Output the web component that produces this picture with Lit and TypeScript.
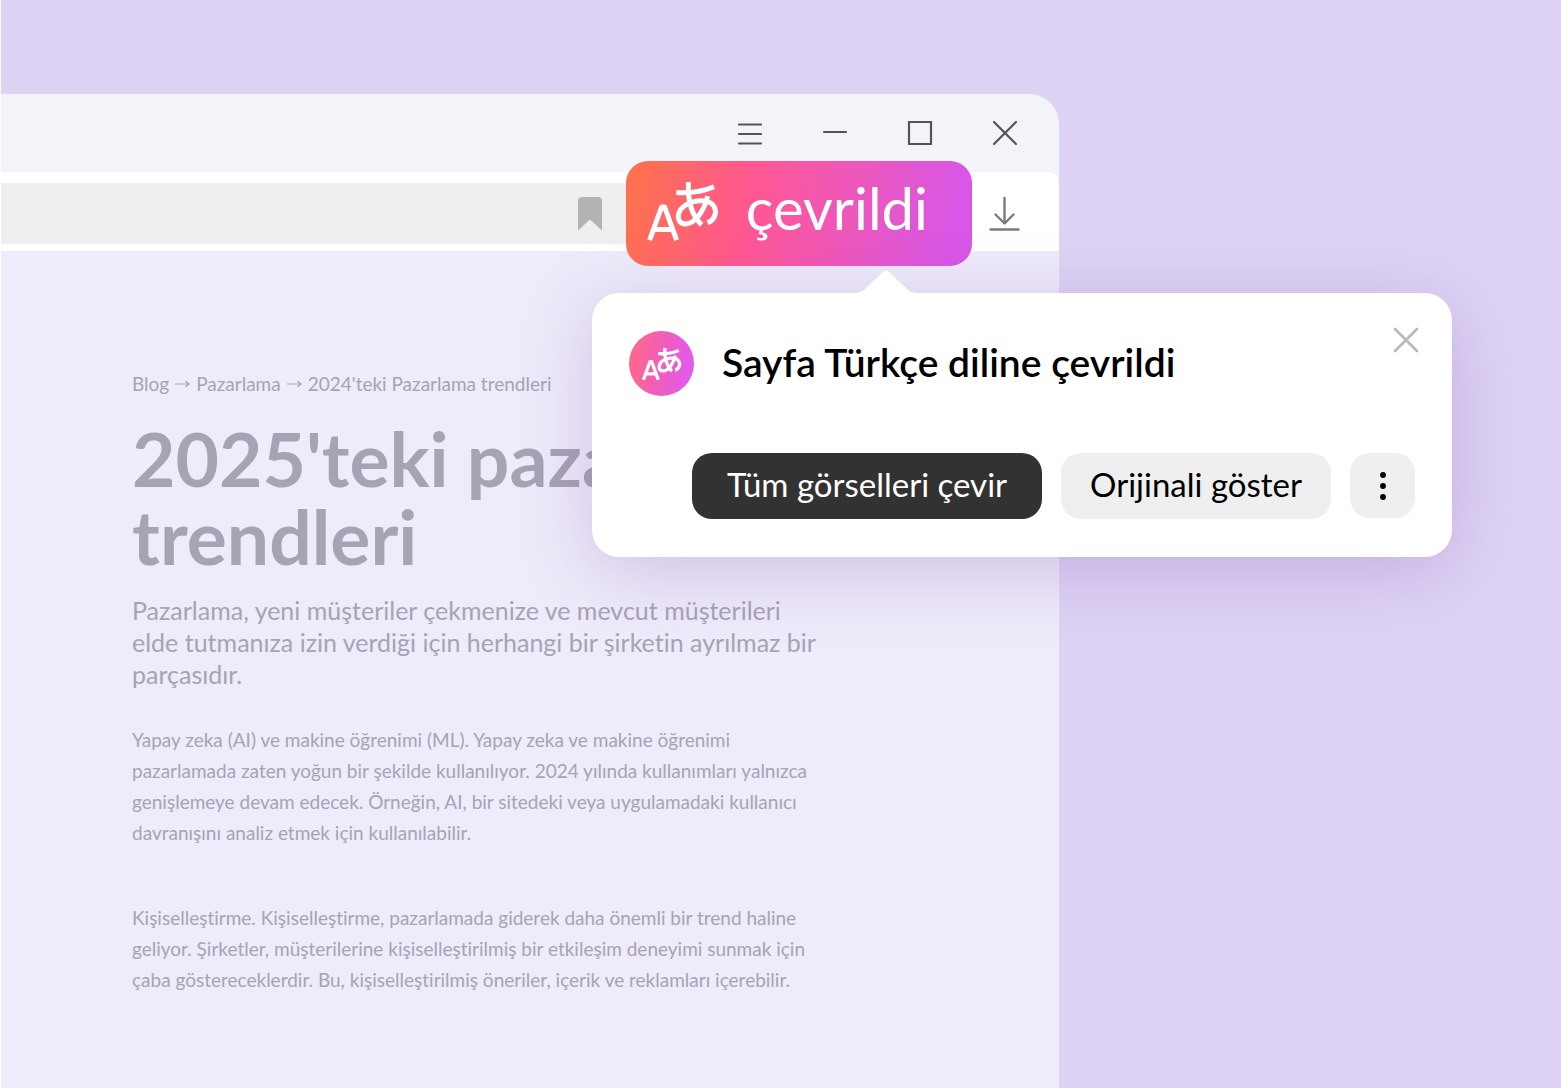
import { LitElement, html, css, svg } from "lit";
import { customElement } from "lit/decorators.js";

const translateIcon = svg`
  <g fill="none" stroke="currentColor">
    <path d="M2.600 59.200 14.600 26h3L29.600 59.200M7 48.400h18.400" stroke-linejoin="round" />
    <path d="M29.400 11.600Q50 13 67 5.800" />
    <path d="M41.500 1.200C40.500 20 44 34 54.600 43.800" />
    <path d="M60.700 15.200C57 30 48 43.500 38 43C29 42.500 29 30.500 38 24.500C47 19 59 18 65 23C71.500 29 68 39.500 60.400 41.600" />
  </g>`;

@customElement("translate-mark")
export class TranslateMark extends LitElement {
  static styles = css`
    :host { display: block; flex: none; stroke-width: 5; }
    .mark { display: block; width: 100%; height: 100%; overflow: visible; }
  `;
  render() {
    return html`<svg class="mark" viewBox="0 0 71 61" aria-hidden="true">${translateIcon}</svg>`;
  }
}

@customElement("translate-popup")
export class TranslatePopup extends LitElement {
  static styles = css`
    :host {
      display: block;
      box-sizing: border-box;
      padding: 38px 37px;
      border-radius: 27px;
      background: #fff;
      box-shadow: 0 14px 72px rgba(118, 70, 170, 0.26);
    }
    .arrow {
      position: absolute;
      left: 264px;
      top: -23px;
      width: 60px;
      height: 24px;
      fill: #fff;
    }
    .head { display: flex; align-items: flex-start; gap: 28px; }
    .badge {
      display: flex;
      align-items: center;
      justify-content: center;
      width: 65px;
      height: 65px;
      border-radius: 50%;
      color: #fff;
      background: linear-gradient(100deg, #ff6a86 5%, #f45fae 40%, #e15aee 90%);
    }
    .badge-mark { width: 39px; height: 34px; stroke-width: 6; }
    .title { flex: 1; margin: 0; font-size: 39px; line-height: 63px; font-weight: 600; color: #000; }
    .actions { display: flex; justify-content: flex-end; align-items: flex-start; gap: 19px; margin-top: 57px; }
    .close, .action, .more { border: 0; margin: 0; font: inherit; cursor: pointer; }
    .close { padding: 0; margin-right: -4px; margin-top: -4px; background: none; }
    .icon { display: block; }
    .action {
      padding: 0 29px 4px;
      border-radius: 20px;
      background: #efefef;
      color: #000;
      font-size: 33px;
      line-height: 62px;
      white-space: nowrap;
    }
    .primary { padding: 0 35px 4px; background: #323232; color: #fff; }
    .more {
      display: flex;
      align-items: center;
      justify-content: center;
      width: 65px;
      height: 65px;
      padding: 0;
      border-radius: 20px;
      background: #efefef;
    }
  `;
  render() {
    return html`
      <svg class="arrow" viewBox="0 0 60 24" aria-hidden="true">
        <path d="M0 24V23C6 22.500 9 19 13 15L26.500 2.500Q30 -1 33.500 2.500L47 15C51 19 54 22.500 60 23V24Z" />
      </svg>
      <div class="head">
        <div class="badge"><translate-mark class="badge-mark"></translate-mark></div>
        <h2 class="title">Sayfa Türkçe diline çevrildi</h2>
        <button class="close" aria-label="Kapat">
          <svg class="icon" width="26" height="26" viewBox="0 0 26 26">
            <path d="M2 2 24 24M24 2 2 24" stroke="#b9b9b9" stroke-width="2.600" stroke-linecap="round" />
          </svg>
        </button>
      </div>
      <div class="actions">
        <button class="action primary">Tüm görselleri çevir</button>
        <button class="action">Orijinali göster</button>
        <button class="more" aria-label="Diğer">
          <svg class="icon" width="6" height="28" viewBox="0 0 6 28">
            <circle cx="3" cy="3" r="2.900" /><circle cx="3" cy="14" r="2.900" /><circle cx="3" cy="25" r="2.900" />
          </svg>
        </button>
      </div>
    `;
  }
}

@customElement("app-root")
export class AppRoot extends LitElement {
  static styles = css`
    :host {
      display: block;
      font-family: Lato, "Noto Sans", sans-serif;
      font-variant-ligatures: none;
    }
    .scene {
      position: relative;
      box-sizing: border-box;
      display: flex;
      min-height: 100vh;
      padding: 94px 502px 0 0;
      border-left: 1px solid #fff;
      background: #ded3f5;
      overflow: hidden;
    }
    .window {
      flex: 1;
      min-width: 0;
      border-top-right-radius: 30px;
      background: #f3f4f9;
      display: flex;
      flex-direction: column;
    }
    .titlebar {
      display: flex;
      justify-content: flex-end;
      align-items: center;
      gap: 59px;
      height: 78px;
      padding-right: 41px;
    }
    .tool { border: 0; margin: 0; padding: 0; background: none; cursor: pointer; }
    .icon { display: block; }
    .line { fill: none; stroke: #525458; stroke-width: 2.200; stroke-linecap: round; }
    .toolbar {
      position: relative;
      z-index: 1;
      display: flex;
      align-items: flex-start;
      height: 79px;
      padding-right: 39px;
      border-top-right-radius: 10px;
      background: #fff;
    }
    .address {
      flex: 1;
      display: flex;
      justify-content: flex-end;
      align-items: center;
      height: 61px;
      margin: 11px -6px 0 0;
      padding-right: 30px;
      box-sizing: border-box;
      border-radius: 0 10px 10px 0;
      background: #efefef;
    }
    .pill {
      display: flex;
      align-items: center;
      gap: 28px;
      box-sizing: border-box;
      height: 105px;
      margin: -11px 17px 0 0;
      padding: 0 44px 4px 21px;
      border: 0;
      border-radius: 22px;
      color: #fff;
      background: linear-gradient(100deg, #ff7051 4%, #ff5794 37%, #d857e6 94%);
      font: inherit;
      font-size: 58px;
      line-height: 69px;
      cursor: pointer;
    }
    .pill-mark { width: 71px; height: 61px; }
    .pill-text { padding-bottom: 9px; }
    .download { margin-top: 24px; }
    .page {
      flex: 1;
      padding: 121px 131px 0;
      background: #eeebfa;
      color: #a6a3b5;
      font-size: 19px;
    }
    .crumbs { display: flex; align-items: center; gap: 6px; line-height: 24px; }
    .crumb { color: inherit; text-decoration: none; }
    .text { max-width: 690px; }
    .heading { margin: 23px 0 0; font-size: 75px; line-height: 78px; font-weight: 700; }
    .lead { margin: 19px 0 0; font-size: 25px; line-height: 32px; }
    .para { margin: 34px 0 0; line-height: 31px; }
    .para + .para { margin-top: 54px; }
    .popup {
      position: absolute;
      z-index: 2;
      top: 293px;
      right: 109px;
      width: 860px;
    }
  `;

  private arrow() {
    return html`<svg class="icon" width="15" height="10" viewBox="0 0 15 10" aria-hidden="true">
      <path d="M0 5H14M10.500 2 14 5 10.500 8" fill="none" stroke="#a6a3b5" stroke-width="1.200" />
    </svg>`;
  }

  render() {
    return html`
      <main class="scene">
        <section class="window">
          <header class="titlebar">
            <button class="tool" aria-label="Menü">
              <svg class="icon" width="26" height="26" viewBox="0 0 26 26"><path class="line" d="M2 4.500H24M2 14H24M2 23.500H24" /></svg>
            </button>
            <button class="tool" aria-label="Simge durumuna küçült">
              <svg class="icon" width="26" height="26" viewBox="0 0 26 26"><path class="line" d="M2 12H24" /></svg>
            </button>
            <button class="tool" aria-label="Ekranı kapla">
              <svg class="icon" width="26" height="26" viewBox="0 0 26 26"><path class="line" d="M2 2H24V24H2Z" /></svg>
            </button>
            <button class="tool" aria-label="Pencereyi kapat">
              <svg class="icon" width="26" height="26" viewBox="0 0 26 26"><path class="line" d="M2 2 24 24M24 2 2 24" /></svg>
            </button>
          </header>
          <div class="toolbar">
            <div class="address">
              <button class="tool" aria-label="Yer imi">
                <svg class="icon" width="24" height="34" viewBox="0 0 24 34"><path d="M0 4Q0 0 4 0H20Q24 0 24 4V33.500L12 22.500 0 33.500Z" fill="#b3b3b3" /></svg>
              </button>
            </div>
            <button class="pill">
              <translate-mark class="pill-mark"></translate-mark>
              <span class="pill-text">çevrildi</span>
            </button>
            <button class="tool download" aria-label="İndirilenler">
              <svg class="icon" width="31" height="36" viewBox="0 0 31 36">
                <path d="M15.500 2V27M6.500 18.500 15.500 27.500 24.500 18.500M1.500 33.500H29.500" fill="none" stroke="#7b7b7b" stroke-width="2.400" stroke-linecap="round" stroke-linejoin="round" />
              </svg>
            </button>
          </div>
          <article class="page">
            <nav class="crumbs">
              <a class="crumb" href="#blog">Blog</a>${this.arrow()}
              <a class="crumb" href="#pazarlama">Pazarlama</a>${this.arrow()}
              <a class="crumb" href="#trendler">2024'teki Pazarlama trendleri</a>
            </nav>
            <div class="text">
              <h1 class="heading">2025'teki pazarlama trendleri</h1>
              <p class="lead">Pazarlama, yeni müşteriler çekmenize ve mevcut müşterileri elde tutmanıza izin verdiği için herhangi bir şirketin ayrılmaz bir parçasıdır.</p>
              <p class="para">Yapay zeka (AI) ve makine öğrenimi (ML). Yapay zeka ve makine öğrenimi pazarlamada zaten yoğun bir şekilde kullanılıyor. 2024 yılında kullanımları yalnızca genişlemeye devam edecek. Örneğin, AI, bir sitedeki veya uygulamadaki kullanıcı davranışını analiz etmek için kullanılabilir.</p>
              <p class="para">Kişiselleştirme. Kişiselleştirme, pazarlamada giderek daha önemli bir trend haline geliyor. Şirketler, müşterilerine kişiselleştirilmiş bir etkileşim deneyimi sunmak için çaba göstereceklerdir. Bu, kişiselleştirilmiş öneriler, içerik ve reklamları içerebilir.</p>
            </div>
          </article>
        </section>
        <translate-popup class="popup"></translate-popup>
      </main>
    `;
  }
}
